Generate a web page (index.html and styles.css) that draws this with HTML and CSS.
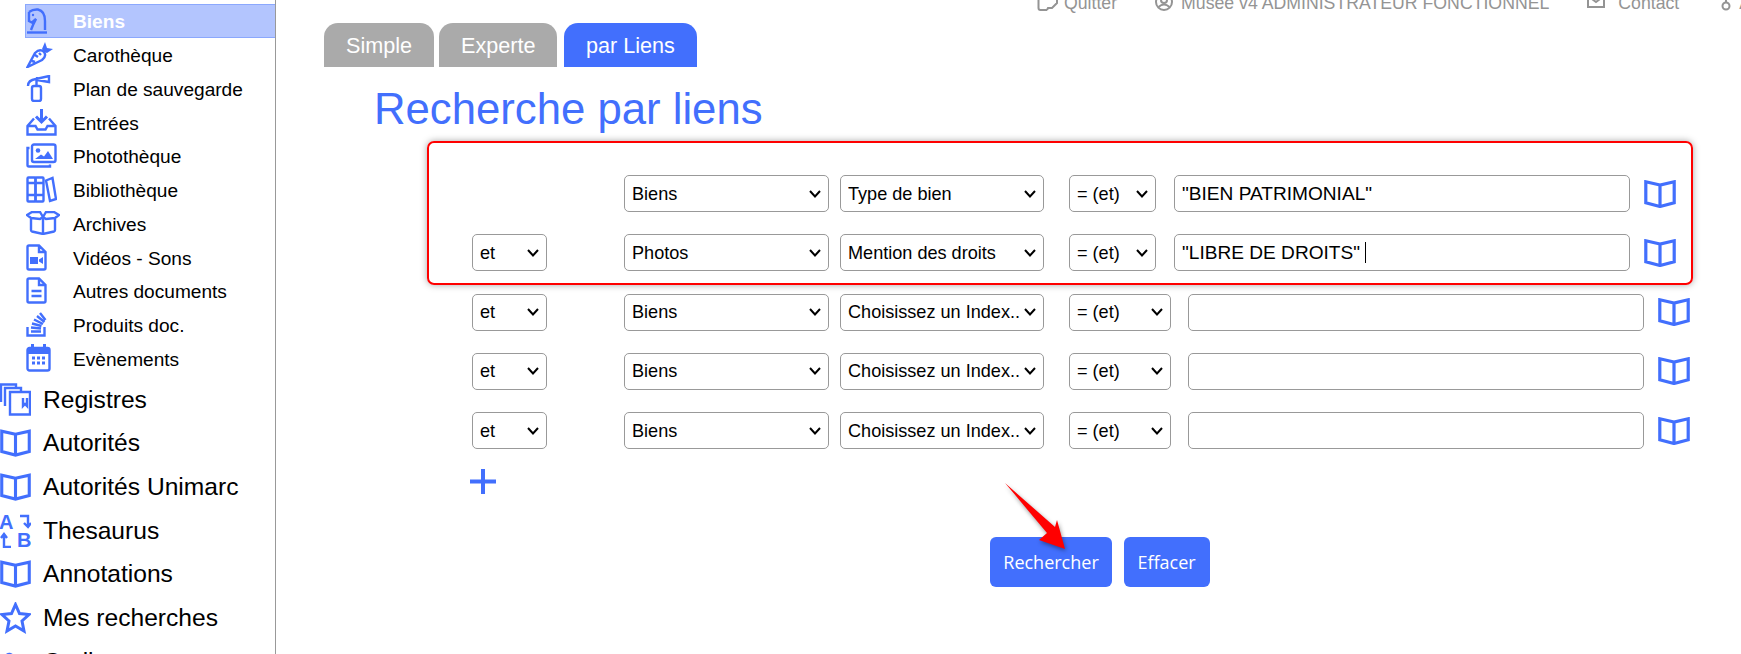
FILE: index.html
```html
<!DOCTYPE html>
<html lang="fr">
<head>
<meta charset="utf-8">
<title>Recherche par liens</title>
<link rel="stylesheet" href="styles.css">
</head>
<body>
<svg class="defs" width="0" height="0" aria-hidden="true">
  <symbol id="book" viewBox="0 0 32 28"><path d="M16 5L1.800 1.800V22.800L16 26.500L30.200 22.800V1.800ZM16 5V26.500"/></symbol>
</svg>
<aside class="sidebar">
  <ul class="sub">
    <li class="sub-item active"><span class="ico"><svg width="22" height="26" viewBox="0 0 22 26"><path d="M3 4Q7 1 12 1.500Q19 3 19 13V22M3 4V13L6 14.500L10 11L7 17L5 22"/><path d="M1 24.500H21"/><circle class="fill" cx="7" cy="7" r="1.200"/></svg></span>Biens</li>
    <li class="sub-item"><span class="ico"><svg width="27" height="26" viewBox="0 0 27 26"><path d="M1.500 25L9 11Q14 6 18 10Q21 14 16 18ZM9 13L12 15M6 19L9 20M13 11L15 13"/><path class="fill" d="M16 7L19 0L21 6L27 7L21 11L18 10Z"/></svg></span>Carothèque</li>
    <li class="sub-item"><span class="ico"><svg width="25" height="27" viewBox="0 0 25 27"><rect x="6" y="11" width="9" height="15" rx="2"/><path d="M10.500 11V4M2 11Q2 5 10 4L23 1V7L11 5M11 2V4"/></svg></span>Plan de sauvegarde</li>
    <li class="sub-item"><span class="ico"><svg width="31" height="27" viewBox="0 0 31 27"><path d="M15.500 0V12M10 7.500L15.500 13L21 7.500" class="thick"/><path d="M8 9.500L1.500 17V25.500H29.500V17L23 9.500M1.500 17H9.500L11.500 20.500H19.500L21.500 17H29.500"/></svg></span>Entrées</li>
    <li class="sub-item"><span class="ico"><svg width="31" height="25" viewBox="0 0 31 25"><rect x="6" y="1.500" width="23.500" height="17.500" rx="2"/><path d="M3.500 5H1.500V22Q1.500 23.500 3 23.500H24V21.500"/><circle class="fill" cx="12" cy="7.500" r="2.300"/><path class="fill" d="M9 16L15 11.500L18 13.500L22 8L27 16Z"/></svg></span>Photothèque</li>
    <li class="sub-item"><span class="ico"><svg width="31" height="27" viewBox="0 0 31 27"><rect x="1.500" y="1.500" width="8" height="24" rx="1"/><rect x="9.500" y="1.500" width="8" height="24" rx="1"/><path d="M1.500 7H17.500M1.500 19H17.500M20 4.500L26.500 2L30 23L24 25Z"/></svg></span>Bibliothèque</li>
    <li class="sub-item"><span class="ico"><svg width="34" height="24" viewBox="0 0 34 24"><path d="M5 8V19Q5 20 6 20.500L17 23L28 20.500Q29 20 29 19V8M17 6V23M5 7L1 4L6 1H14L17 6L20 1H28L33 4L29 7L20 8L17 6L14 8Z"/></svg></span>Archives</li>
    <li class="sub-item"><span class="ico"><svg width="21" height="27" viewBox="0 0 21 27"><path d="M3 1.500H13L19.500 8V24Q19.500 25.500 18 25.500H3Q1.500 25.500 1.500 24V3Q1.500 1.500 3 1.500ZM13 1.500V8H19.500"/><path class="fill" d="M4 13H12V20H4ZM13 15.500L17 13V20L13 17.500Z"/></svg></span>Vidéos - Sons</li>
    <li class="sub-item"><span class="ico"><svg width="21" height="27" viewBox="0 0 21 27"><path d="M3 1.500H13L19.500 8V24Q19.500 25.500 18 25.500H3Q1.500 25.500 1.500 24V3Q1.500 1.500 3 1.500ZM13 1.500V8H19.500M5.500 14H15.500M5.500 19H15.500"/></svg></span>Autres documents</li>
    <li class="sub-item"><span class="ico"><svg width="21" height="25" viewBox="0 0 21 25"><path d="M1.500 15V23.500H18.500V15M5 19.500H15M5 15.500L15 16.500M6 11.500L15.500 14M8 7.500L17 12M11 4L18.500 10M14 1L19.500 8"/></svg></span>Produits doc.</li>
    <li class="sub-item"><span class="ico"><svg width="25" height="28" viewBox="0 0 25 28"><rect x="1.500" y="4" width="22" height="22.500" rx="2"/><path class="fill" d="M1.500 4H23.500V10H1.500ZM5 0H8V4H5ZM17 0H20V4H17Z"/><path class="dots" d="M6 14H9M11 14H14M16 14H19M6 19H9M11 19H14M16 19H19"/></svg></span>Evènements</li>
  </ul>
  <ul class="top">
    <li class="top-item"><span class="ico-top"><svg width="31" height="33" viewBox="0 0 31 33"><path d="M1 19V1.500H16V4M5 23V5H21V9M10 31.500V9H30V31.500ZM23 15V23L25 21L27 23V15"/></svg></span>Registres</li>
    <li class="top-item"><span class="ico-top"><svg class="book" width="31" height="28"><use href="#book"/></svg></span>Autorités</li>
    <li class="top-item"><span class="ico-top"><svg class="book" width="31" height="28"><use href="#book"/></svg></span>Autorités Unimarc</li>
    <li class="top-item"><span class="ico-top"><svg width="31" height="35" viewBox="0 0 31 35"><text class="letter" x="-1" y="16">A</text><text class="letter" x="17" y="34">B</text><path d="M20 3H28V13M24 10L28 14L31 10M11 34H4V22M1 25L4 21L7 25"/></svg></span>Thesaurus</li>
    <li class="top-item"><span class="ico-top"><svg class="book" width="31" height="28"><use href="#book"/></svg></span>Annotations</li>
    <li class="top-item"><span class="ico-top"><svg width="31" height="32" viewBox="0 0 31 32"><path class="thick" d="M15.500 2.500L19.500 11.500L29 12.500L22 19L24 29L15.500 24L7 29L9 19L2 12.500L11.500 11.500Z"/></svg></span>Mes recherches</li>
    <li class="top-item"><span class="ico-top"><svg width="31" height="28" viewBox="0 0 31 28"><path class="thick" d="M5 9Q10 3 14 10M8 11Q10 7 12 12M14 10L26 24"/></svg></span>Outils</li>
  </ul>
</aside>
<main class="main">
  <nav class="toplinks">
    <span class="link l-quit"><svg width="21" height="20" viewBox="0 0 21 20"><path d="M1.500 2V15Q1.500 17 3.500 17H10M20 2V10L15 15H11L10 17"/></svg>Quitter</span>
    <span class="link"><svg width="18" height="20" viewBox="0 0 18 20"><circle cx="9" cy="9" r="8"/><circle cx="9" cy="7" r="3"/><path d="M3.500 14Q9 9 14.500 14"/></svg>Musée v4 ADMINISTRATEUR FONCTIONNEL</span>
    <span class="link l-contact"><svg width="18" height="20" viewBox="0 0 18 20"><path d="M1 1V14H17V1M1 3L9 9L17 3"/></svg>Contact</span>
    <span class="link l-key"><svg width="10" height="20" viewBox="0 0 10 20"><circle cx="5" cy="13" r="3.500"/><path d="M5 9.500V0M5 3H9"/></svg>Aide</span>
  </nav>
  <div class="tabs">
    <span class="tab">Simple</span>
    <span class="tab">Experte</span>
    <span class="tab current">par Liens</span>
  </div>
  <h1 class="title">Recherche par liens</h1>
  <form class="form">
    <div class="row narrow">
      <span class="conj-empty"></span>
      <select class="sel-base"><option>Biens</option></select>
      <select class="sel-index"><option>Type de bien</option></select>
      <select class="sel-op"><option>= (et)</option></select>
      <input class="value" type="text" value="&quot;BIEN PATRIMONIAL&quot;">
      <svg class="book"><use href="#book"/></svg>
    </div>
    <div class="row narrow">
      <select class="sel-conj"><option>et</option></select>
      <select class="sel-base"><option>Photos</option></select>
      <select class="sel-index"><option>Mention des droits</option></select>
      <select class="sel-op"><option>= (et)</option></select>
      <span class="value-wrap"><input class="value" type="text" value="&quot;LIBRE DE DROITS&quot;"><span class="caret"></span></span>
      <svg class="book"><use href="#book"/></svg>
    </div>
    <div class="row">
      <select class="sel-conj"><option>et</option></select>
      <select class="sel-base"><option>Biens</option></select>
      <select class="sel-index"><option>Choisissez un Index..</option></select>
      <select class="sel-op"><option>= (et)</option></select>
      <input class="value" type="text">
      <svg class="book"><use href="#book"/></svg>
    </div>
    <div class="row">
      <select class="sel-conj"><option>et</option></select>
      <select class="sel-base"><option>Biens</option></select>
      <select class="sel-index"><option>Choisissez un Index..</option></select>
      <select class="sel-op"><option>= (et)</option></select>
      <input class="value" type="text">
      <svg class="book"><use href="#book"/></svg>
    </div>
    <div class="row">
      <select class="sel-conj"><option>et</option></select>
      <select class="sel-base"><option>Biens</option></select>
      <select class="sel-index"><option>Choisissez un Index..</option></select>
      <select class="sel-op"><option>= (et)</option></select>
      <input class="value" type="text">
      <svg class="book"><use href="#book"/></svg>
    </div>
    <svg class="plus" width="26" height="25" viewBox="0 0 26 25"><path d="M13 0V25M0 12.500H26"/></svg>
    <div class="actions">
      <button class="btn" type="button">Rechercher</button>
      <button class="btn" type="button">Effacer</button>
    </div>
  </form>
</main>
<div class="redbox"></div>
<svg class="arrow" width="80" height="80" viewBox="0 0 80 80"><path d="M5 3L55 47L57 40L65 69L39 60L47 53Z"/></svg>
</body>
</html>
```

FILE: styles.css
```css
* { box-sizing: border-box; }
html, body { margin: 0; height: 654px; overflow: hidden; }
body {
  display: flex;
  position: relative;
  width: 1741px;
  background: #fff;
  color: #000;
  font-family: "Liberation Sans", Arial, sans-serif;
}
.defs { position: absolute; }
svg { fill: none; stroke: #426ffd; stroke-width: 2.4; display: block; flex: none; }
svg .fill { fill: #426ffd; stroke: none; }
svg .thick { stroke-width: 3; }
svg .dots { stroke-width: 3; }
svg .letter { fill: #426ffd; stroke: none; font: bold 20px "Liberation Sans", sans-serif; }
svg.book { stroke-width: 3.2; }

.sidebar {
  width: 276px;
  flex: none;
  height: 654px;
  overflow: hidden;
  border-right: 1px solid #999;
  padding-top: 4px;
}
.sub, .top { list-style: none; margin: 0; padding: 0; }
.sub { padding-left: 25px; }
.sub-item {
  display: flex;
  align-items: center;
  height: 33.75px;
  font-size: 19.1px;
  padding-top: 3px;
}
.sub-item .ico { margin-top: -3px; }
.sub-item.active {
  background: #b3c5fe;
  border: 1px solid #8ba8fd;
  border-right: 0;
  color: #fff;
  font-weight: bold;
}
.ico { width: 48px; flex: none; display: flex; padding-left: 1px; }
.active .ico { width: 47px; padding-left: 0; }
.top { margin-top: 2px; }
.top-item {
  display: flex;
  align-items: center;
  height: 43.7px;
  font-size: 24.6px;
  padding-top: 1px;
}
.ico-top { width: 43px; flex: none; display: flex; }

.main { flex: 1; min-width: 0; }
.toplinks {
  display: flex;
  height: 20px;
  margin-top: -7px;
  padding-left: 761px;
  font-size: 17.7px;
  line-height: 20px;
  color: #949494;
  white-space: nowrap;
  overflow: hidden;
}
.toplinks svg { stroke: #949494; stroke-width: 2; }
.link { display: flex; gap: 8px; margin-right: 38px; flex: none; }
.l-quit { gap: 6px; }
.l-contact { gap: 13px; margin-right: 42px; }
.tabs { display: flex; gap: 5px; margin: 10px 0 0 48px; }
.tab {
  height: 44px;
  padding: 0 22px;
  background: #aaa;
  color: #fff;
  border-radius: 14px 14px 0 0;
  font-size: 21.6px;
  line-height: 46px;
}
.tab.current { background: #426ffd; margin-left: 1.5px; }
.title {
  margin: 16px 0 0 98px;
  font-size: 43.7px;
  line-height: 52px;
  font-weight: normal;
  color: #426ffd;
}
.form { margin-top: 40px; padding-left: 196px; }
.row { display: flex; align-items: center; height: 37px; margin-bottom: 22.3px; }
.row:nth-child(5) { margin-bottom: 20px; }
select, .value {
  height: 37px;
  border: 1px solid #999;
  border-radius: 5px;
  background: #fff;
  color: #000;
  font: 18.1px "Liberation Sans", Arial, sans-serif;
  flex: none;
}
select {
  appearance: none;
  padding: 0 0 0 7px;
  background: #fff url("data:image/svg+xml,%3Csvg xmlns='http://www.w3.org/2000/svg' width='12' height='8' viewBox='0 0 12 8'%3E%3Cpath d='M1 1L6 6.500L11 1' fill='none' stroke='%23000' stroke-width='2'/%3E%3C/svg%3E") no-repeat right 7px center;
}
.value { width: 456px; padding: 0 0 0 7px; font-size: 19.1px; display: block; }
.conj-empty { width: 152px; flex: none; }
.sel-conj { width: 75px; margin-right: 77px; }
.sel-base { width: 205px; margin-right: 11px; }
.sel-index { width: 204px; margin-right: 25px; }
.sel-op { width: 102px; margin-right: 17px; }
.narrow .sel-op { width: 87px; margin-right: 18px; }
.row .book { width: 32px; height: 28px; margin-left: 13.5px; }
.value-wrap { position: relative; display: block; flex: none; }
.caret {
  position: absolute;
  left: 191px;
  top: 8px;
  width: 1px;
  height: 21px;
  background: #000;
}
.plus { margin-left: -2px; stroke-width: 4; }
.actions { display: flex; gap: 11.5px; margin: 43px 0 0 518px; }
.btn {
  height: 50px;
  border: 0;
  border-radius: 6px;
  background: #426ffd;
  color: #fff;
  font: 18px "Open Sans", sans-serif;
  padding: 0;
}
.btn:first-child { width: 122px; }
.btn:last-child { width: 86px; }

.redbox {
  position: absolute;
  left: 427px;
  top: 141px;
  width: 1266px;
  height: 144px;
  border: 2px solid #f00;
  border-radius: 7px;
  box-shadow: 0 0 7px rgba(0, 0, 0, .35);
  pointer-events: none;
}
.arrow {
  position: absolute;
  left: 1000px;
  top: 480px;
  stroke: none;
  fill: #f00;
  filter: drop-shadow(1px 2px 2px rgba(0, 0, 0, .4));
}
```
